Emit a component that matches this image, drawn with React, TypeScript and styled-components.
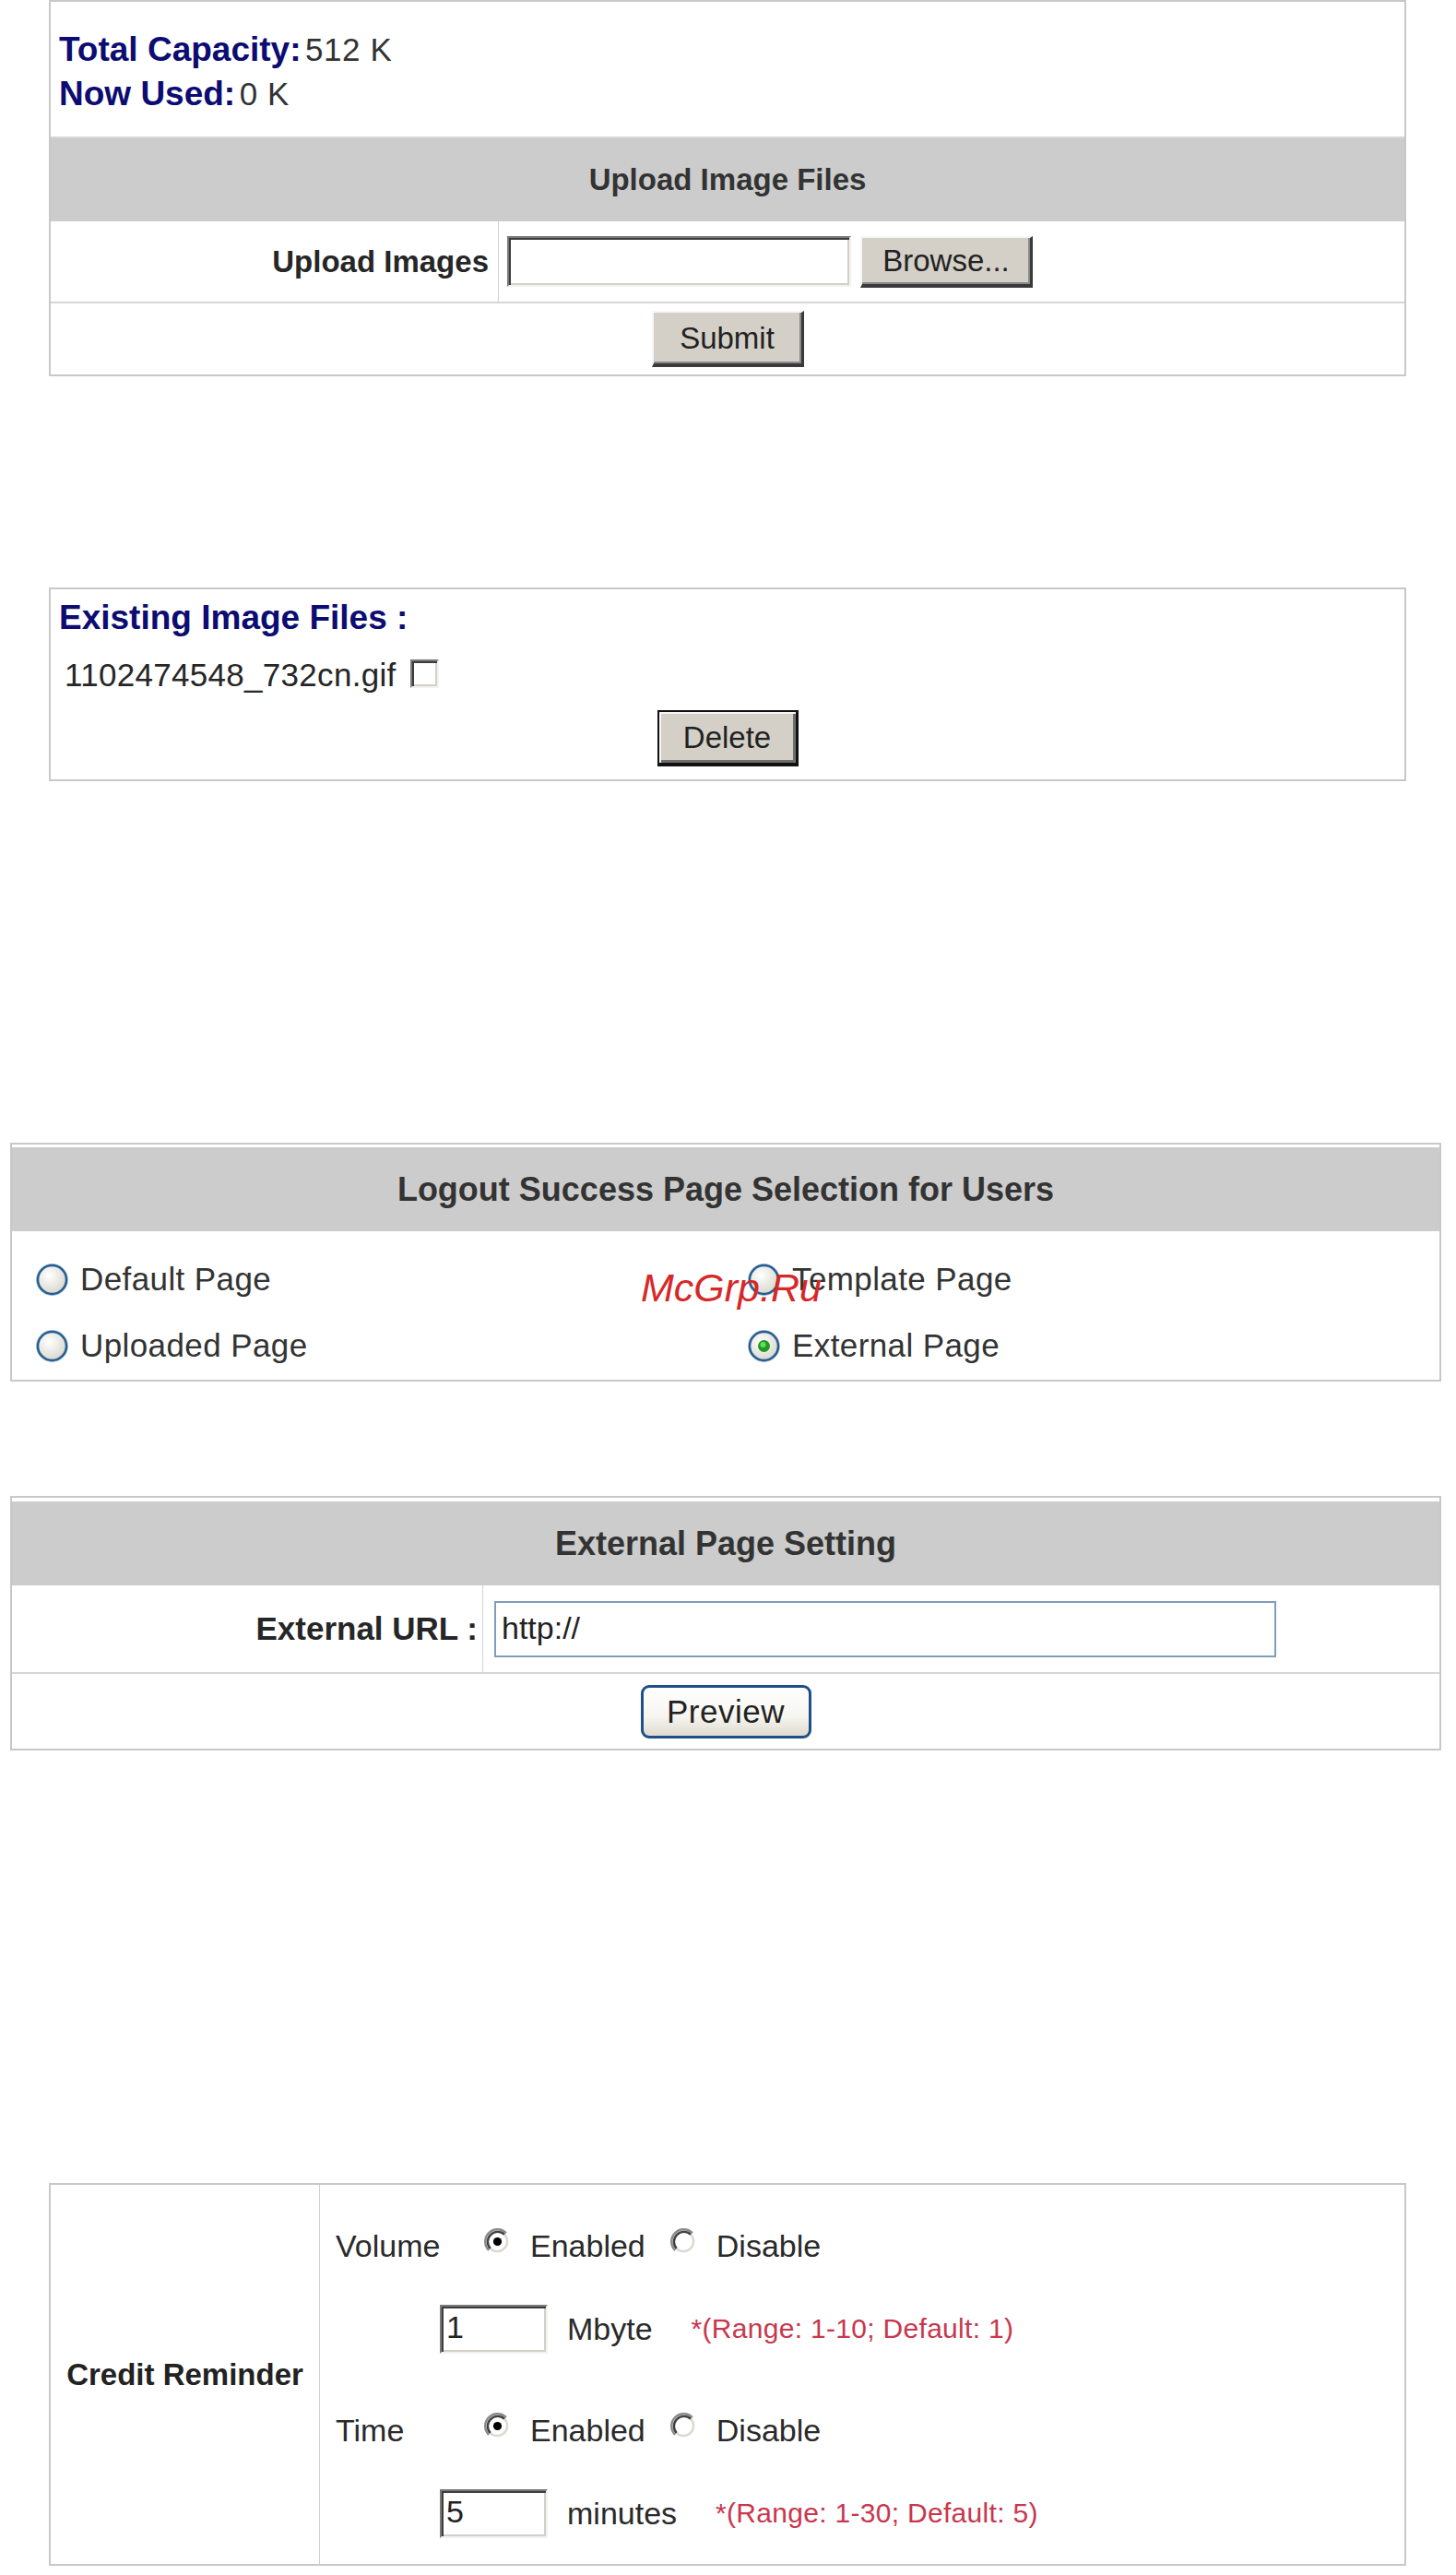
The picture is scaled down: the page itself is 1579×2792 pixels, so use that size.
import React from "react";
import styled, { createGlobalStyle } from "styled-components";

const GlobalStyle = createGlobalStyle`
  html, body {
    margin: 0;
    padding: 0;
    background: #ffffff;
  }
  body {
    font-family: "Liberation Sans", Arial, sans-serif;
    color: #222222;
  }
  * {
    box-sizing: border-box;
  }
`;

const Page = styled.div`
  width: 1579px;
  display: flex;
  flex-direction: column;
  align-items: flex-start;
`;

const Panel = styled.section<{ $mt: number; $ml: number; $w: number }>`
  position: relative;
  margin-top: ${(p) => p.$mt}px;
  margin-left: ${(p) => p.$ml}px;
  width: ${(p) => p.$w}px;
  border: 2px solid #c8c8c8;
  background: #ffffff;
`;

/* ---------- classic (win2000) parts ---------- */

const InfoBlock = styled.div`
  height: 148px;
  padding: 28px 0 0 9px;
  border-bottom: 2px solid #d6d6d6;
`;

const InfoLine = styled.div`
  height: 48px;
  line-height: 48px;
  white-space: nowrap;
`;

const BlueLabel = styled.span`
  font-size: 37px;
  font-weight: bold;
  color: #0c0c72;
`;

const Value = styled.span`
  font-size: 35px;
  letter-spacing: 0.6px;
  color: #333333;
`;

const SectionHeader = styled.div<{ $h: number; $mt?: number }>`
  height: ${(p) => p.$h}px;
  margin-top: ${(p) => p.$mt ?? 0}px;
  background: #cccccc;
  display: flex;
  align-items: center;
  justify-content: center;
  font-size: ${(p) => (p.$mt ? 36 : 33)}px;
  font-weight: bold;
  color: #333333;
`;

const FieldRow = styled.div<{ $h: number; $labelW: number; $line?: boolean }>`
  display: grid;
  grid-template-columns: ${(p) => p.$labelW}px 1fr;
  height: ${(p) => p.$h}px;
  border-bottom: ${(p) => (p.$line ? "2px solid #d6d6d6" : "none")};
`;

const FieldLabel = styled.div<{ $pr: number; $size: number }>`
  display: flex;
  align-items: center;
  justify-content: flex-end;
  padding-right: ${(p) => p.$pr}px;
  border-right: 1px solid #d2d2d2;
  font-size: ${(p) => p.$size}px;
  font-weight: bold;
  color: #262626;
  white-space: nowrap;
`;

const FieldCell = styled.div<{ $pl: number }>`
  display: flex;
  align-items: center;
  gap: 10px;
  padding-left: ${(p) => p.$pl}px;
`;

const ClassicInput = styled.div<{ $w: number; $h: number }>`
  width: ${(p) => p.$w}px;
  height: ${(p) => p.$h}px;
  background: #ffffff;
  border-top: 2px solid #7a7a7a;
  border-left: 2px solid #7a7a7a;
  border-bottom: 2px solid #f2f2f2;
  border-right: 2px solid #f2f2f2;
  box-shadow: inset 2px 2px 0 #3c3c3c, inset -2px -2px 0 #d4d0c8;
  font-size: 34px;
  line-height: ${(p) => p.$h - 8}px;
  padding-left: 5px;
  color: #222222;
`;

const ClassicButton = styled.div<{ $w: number; $h: number; $default?: boolean }>`
  width: ${(p) => p.$w}px;
  height: ${(p) => p.$h}px;
  background: #d4d0c8;
  display: flex;
  align-items: center;
  justify-content: center;
  font-size: 33px;
  color: #222222;
  border-top: 2px solid ${(p) => (p.$default ? "#111111" : "#f6f6f6")};
  border-left: 2px solid ${(p) => (p.$default ? "#111111" : "#f6f6f6")};
  border-right: 3px solid ${(p) => (p.$default ? "#111111" : "#3a3a3a")};
  border-bottom: 4px solid ${(p) => (p.$default ? "#111111" : "#3a3a3a")};
  box-shadow: ${(p) =>
    p.$default
      ? "inset 2px 2px 0 #f6f6f6, inset -3px -3px 0 #6e6e6e"
      : "inset -2px -2px 0 #8a8a8a"};
`;

const ActionRow = styled.div<{ $h: number; $line?: boolean }>`
  height: ${(p) => p.$h}px;
  border-top: ${(p) => (p.$line ? "2px solid #d6d6d6" : "none")};
  display: flex;
  align-items: center;
  justify-content: center;
`;

const ExistingBlock = styled.div`
  padding: 9px 0 14px 9px;
  display: flex;
  flex-direction: column;
`;

const BlueTitle = styled.div`
  height: 44px;
  line-height: 44px;
  font-size: 37px;
  font-weight: bold;
  color: #0c0c72;
`;

const FileLine = styled.div`
  height: 44px;
  margin-top: 18px;
  padding-left: 6px;
  display: flex;
  align-items: center;
  gap: 15px;
  font-size: 35px;
  letter-spacing: 0.3px;
  color: #262626;
`;

const ClassicCheck = styled.span`
  width: 31px;
  height: 31px;
  margin-bottom: 4px;
  background: #ffffff;
  border-top: 2px solid #7a7a7a;
  border-left: 2px solid #7a7a7a;
  border-bottom: 2px solid #f2f2f2;
  border-right: 2px solid #f2f2f2;
  box-shadow: inset 2px 2px 0 #3c3c3c, inset -2px -2px 0 #d4d0c8;
`;

const ButtonLine = styled.div`
  margin-top: 16px;
  margin-left: -9px;
  display: flex;
  justify-content: center;
`;

/* ---------- XP parts ---------- */

const RadioGrid = styled.div`
  display: grid;
  grid-template-columns: 772px 1fr;
  grid-auto-rows: 72px;
  padding: 16px 0 1px 25px;
`;

const RadioOption = styled.label`
  display: flex;
  align-items: center;
  gap: 12px;
  font-size: 35px;
  letter-spacing: 0.4px;
  color: #333333;
  white-space: nowrap;
`;

const Watermark = styled.span`
  position: absolute;
  left: 682px;
  top: 135px;
  font-size: 43px;
  line-height: 40px;
  font-style: italic;
  color: #d62828;
  white-space: nowrap;
`;

const XpInput = styled.div<{ $w: number; $h: number }>`
  width: ${(p) => p.$w}px;
  height: ${(p) => p.$h}px;
  border: 2px solid #7f9db9;
  background: #ffffff;
  font-size: 34px;
  line-height: ${(p) => p.$h - 6}px;
  padding-left: 6px;
  color: #222222;
`;

const XpButton = styled.div<{ $w: number; $h: number }>`
  width: ${(p) => p.$w}px;
  height: ${(p) => p.$h}px;
  border: 3px solid #1f4f86;
  border-radius: 9px;
  background: linear-gradient(#ffffff 0%, #f6f5f0 60%, #dedbcf 100%);
  display: flex;
  align-items: center;
  justify-content: center;
  font-size: 35px;
  letter-spacing: 0.5px;
  color: #222222;
`;

/* ---------- credit reminder ---------- */

const CreditGrid = styled.div`
  display: grid;
  grid-template-columns: 292px 1fr;
  height: 411px;
`;

const CreditLabel = styled.div`
  display: flex;
  align-items: center;
  justify-content: center;
  border-right: 1px solid #d2d2d2;
  font-size: 33px;
  font-weight: bold;
  color: #222222;
`;

const OptionCell = styled.div`
  display: flex;
  flex-direction: column;
  gap: 20px;
  padding: 21px 0 5px 17px;
`;

const OptionGroup = styled.div`
  display: flex;
  flex-direction: column;
`;

const OptionLine = styled.div<{ $indent?: number }>`
  height: 90px;
  display: flex;
  align-items: center;
  padding-left: ${(p) => p.$indent ?? 0}px;
  font-size: 34px;
  color: #2a2a2a;
  white-space: nowrap;
`;

const OptionName = styled.span`
  width: 161px;
`;

const Choice = styled.span`
  display: flex;
  align-items: center;
  gap: 21px;
  margin-right: 27px;
  svg {
    margin-bottom: 10px;
  }
`;

const Unit = styled.span`
  margin-left: 21px;
  margin-right: 42px;
`;

const RangeNote = styled.span`
  font-size: 30px;
  letter-spacing: 0.3px;
  color: #c8374d;
`;

const XpRadio = ({ checked }: { checked?: boolean }) => (
  <svg width="37" height="37" viewBox="0 0 37 37">
    <defs>
      <radialGradient id="xpRadioFill" cx="40%" cy="35%" r="70%">
        <stop offset="0" stopColor="#ffffff" />
        <stop offset="1" stopColor="#d6d6cc" />
      </radialGradient>
    </defs>
    <circle cx="18.5" cy="18.5" r="17" fill="none" stroke="#a9c1da" strokeWidth="1" />
    <circle cx="18.5" cy="18.5" r="15.5" fill="url(#xpRadioFill)" stroke="#275d90" strokeWidth="2.5" />
    {checked && (
      <>
        <circle cx="18.5" cy="18.5" r="6.5" fill="#1f9a1f" />
        <circle cx="17.5" cy="17" r="3" fill="#6ad86a" />
      </>
    )}
  </svg>
);

const ClassicRadio = ({ checked }: { checked?: boolean }) => (
  <svg width="29" height="29" viewBox="0 0 12 12">
    <circle cx="6" cy="6" r="5.5" fill="#ffffff" />
    <path d="M 9.89 2.11 A 5.5 5.5 0 0 0 2.11 9.89" fill="none" stroke="#8a8a8a" strokeWidth="1" />
    <path d="M 9.18 2.82 A 4.5 4.5 0 0 0 2.82 9.18" fill="none" stroke="#404040" strokeWidth="1" />
    <path d="M 2.82 9.18 A 4.5 4.5 0 0 0 9.18 2.82" fill="none" stroke="#dcd8d0" strokeWidth="1" />
    {checked && <circle cx="6" cy="6" r="1.9" fill="#000000" />}
  </svg>
);

const App = () => {
  const reminders = [
    { name: "Volume", value: "1", unit: "Mbyte", note: "*(Range: 1-10; Default: 1)" },
    { name: "Time", value: "5", unit: "minutes", note: "*(Range: 1-30; Default: 5)" },
  ];

  return (
    <>
      <GlobalStyle />
      <Page>
        <Panel $mt={0} $ml={53} $w={1472}>
          <InfoBlock>
            <InfoLine>
              <BlueLabel>Total Capacity:</BlueLabel> <Value>512 K</Value>
            </InfoLine>
            <InfoLine>
              <BlueLabel>Now Used:</BlueLabel> <Value>0 K</Value>
            </InfoLine>
          </InfoBlock>
          <SectionHeader $h={90}>Upload Image Files</SectionHeader>
          <FieldRow $h={87} $labelW={486}>
            <FieldLabel $pr={10} $size={33}>
              Upload Images
            </FieldLabel>
            <FieldCell $pl={9}>
              <ClassicInput $w={373} $h={55} />
              <ClassicButton $w={187} $h={56}>
                Browse...
              </ClassicButton>
            </FieldCell>
          </FieldRow>
          <ActionRow $h={79} $line>
            <ClassicButton $w={165} $h={61}>
              Submit
            </ClassicButton>
          </ActionRow>
        </Panel>

        <Panel $mt={229} $ml={53} $w={1472}>
          <ExistingBlock>
            <BlueTitle>Existing Image Files :</BlueTitle>
            <FileLine>
              1102474548_732cn.gif
              <ClassicCheck />
            </FileLine>
            <ButtonLine>
              <ClassicButton $w={153} $h={61} $default>
                Delete
              </ClassicButton>
            </ButtonLine>
          </ExistingBlock>
        </Panel>

        <Panel $mt={392} $ml={11} $w={1552}>
          <SectionHeader $h={91} $mt={3}>
            Logout Success Page Selection for Users
          </SectionHeader>
          <RadioGrid>
            <RadioOption>
              <XpRadio />
              Default Page
            </RadioOption>
            <RadioOption>
              <XpRadio />
              Template Page
            </RadioOption>
            <RadioOption>
              <XpRadio />
              Uploaded Page
            </RadioOption>
            <RadioOption>
              <XpRadio checked />
              External Page
            </RadioOption>
          </RadioGrid>
          <Watermark>McGrp.Ru</Watermark>
        </Panel>

        <Panel $mt={124} $ml={11} $w={1552}>
          <SectionHeader $h={91} $mt={4}>
            External Page Setting
          </SectionHeader>
          <FieldRow $h={96} $labelW={511} $line>
            <FieldLabel $pr={5} $size={35}>
              External URL :
            </FieldLabel>
            <FieldCell $pl={12}>
              <XpInput $w={848} $h={61}>http://</XpInput>
            </FieldCell>
          </FieldRow>
          <ActionRow $h={81}>
            <XpButton $w={185} $h={58}>
              Preview
            </XpButton>
          </ActionRow>
        </Panel>

        <Panel $mt={469} $ml={53} $w={1472}>
          <CreditGrid>
            <CreditLabel>Credit Reminder</CreditLabel>
            <OptionCell>
              {reminders.map((r) => (
                <OptionGroup key={r.name}>
                  <OptionLine>
                    <OptionName>{r.name}</OptionName>
                    <Choice>
                      <ClassicRadio checked />
                      Enabled
                    </Choice>
                    <Choice>
                      <ClassicRadio />
                      Disable
                    </Choice>
                  </OptionLine>
                  <OptionLine $indent={113}>
                    <ClassicInput $w={117} $h={53}>
                      {r.value}
                    </ClassicInput>
                    <Unit>{r.unit}</Unit>
                    <RangeNote>{r.note}</RangeNote>
                  </OptionLine>
                </OptionGroup>
              ))}
            </OptionCell>
          </CreditGrid>
        </Panel>
      </Page>
    </>
  );
};

export default App;
